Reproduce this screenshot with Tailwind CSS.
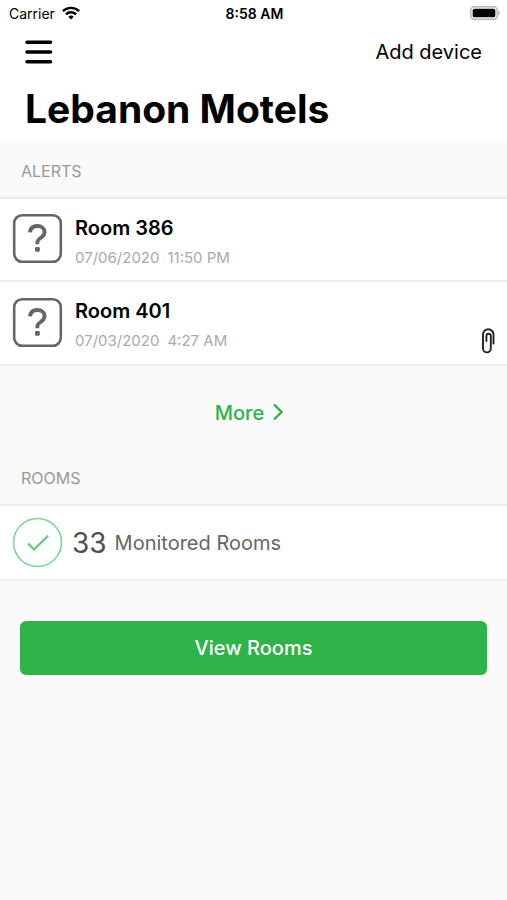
<!DOCTYPE html>
<html lang="en">
<head>
<meta charset="utf-8">
<meta name="viewport" content="width=device-width, initial-scale=1">
<title>Lebanon Motels</title>
<script src="https://cdn.jsdelivr.net/npm/@tailwindcss/browser@4"></script>
</head>
<body class="min-h-screen bg-[#fafafa] font-['Inter',sans-serif] text-black">
<header class="bg-white">
  <div class="grid h-7 grid-cols-3 items-center pr-[7px] pl-[9px] text-[14px] leading-5">
    <div class="flex items-center gap-[7px]">
      <span>Carrier</span>
      <svg class="mb-0.5 h-[14px] w-[18px]" viewBox="0 0 18 14" fill="none" stroke="#000" stroke-width="2.4" aria-label="Wi-Fi">
        <path d="M0.9 5.2a11.6 11.6 0 0 1 16.2 0"/>
        <path d="M3.9 8.3a7.3 7.3 0 0 1 10.2 0"/>
        <path d="M6.3 10.7a3.9 3.9 0 0 1 5.4 0L9 13.4z" fill="#000" stroke="none"/>
      </svg>
    </div>
    <div class="text-center font-semibold">8:58 AM</div>
    <svg class="mb-0.5 h-[14px] w-[30px] justify-self-end" viewBox="0 0 30 14" aria-label="Battery">
      <rect x="0.8" y="0.8" width="26.4" height="12.4" rx="3.6" fill="#fff" stroke="#b5b5b5" stroke-width="1.4"/>
      <rect x="2.7" y="2.7" width="22.6" height="8.6" rx="1.6" fill="#000"/>
      <path d="M28.3 4.8q1.6.6 1.6 2.2t-1.6 2.2z" fill="#b5b5b5"/>
    </svg>
  </div>
  <nav class="flex h-12 items-center justify-between px-[25px]">
    <button type="button" aria-label="Menu">
      <svg class="h-6 w-7" viewBox="0 0 28 24" stroke="#000" stroke-width="3.6" stroke-linecap="round">
        <path d="M2 2.2h23.5M2 12h23.5M2 21.8h23.5"/>
      </svg>
    </button>
    <a href="#" class="text-[20px] leading-6">Add device</a>
  </nav>
  <h1 class="px-[25px] pt-2 pb-2 text-[39px] leading-[49px] font-bold">Lebanon Motels</h1>
</header>
<main>
  <section>
    <h2 class="flex h-[58px] items-center border-b-2 border-[#ededed] px-[21px] pt-1 text-[16px] leading-5 text-[#999]">ALERTS</h2>
    <ul class="bg-white">
      <li class="flex h-[83px] items-center gap-3 border-b-2 border-[#ededed] px-3">
        <svg class="mb-0.5 size-[51px]" viewBox="0 0 51 51" fill="none" stroke="#666" aria-label="Unknown">
          <rect x="2.2" y="2.2" width="46.6" height="46.6" rx="8" stroke-width="2.6"/>
          <path d="M18 19.4c.4-4.200 3.300-6.400 7.300-6.400 4.200 0 7.300 2.300 7.300 6 0 3.100-1.800 4.600-4 6-2.300 1.500-3.300 2.600-3.300 4.800v1.400" stroke-width="3.800"/>
          <rect x="23" y="34" width="4.800" height="4.800" rx="1.200" fill="#666" stroke="none"/>
        </svg>
        <div class="flex flex-col gap-2 pt-1">
          <h3 class="text-[20px] leading-6 font-semibold">Room 386</h3>
          <p class="flex gap-2 text-[15px] leading-5 text-[#aaa]"><span>07/06/2020</span><span>11:50 PM</span></p>
        </div>
      </li>
      <li class="flex h-[84px] items-center gap-3 border-b-2 border-[#ededed] px-3">
        <svg class="mb-0.5 size-[51px]" viewBox="0 0 51 51" fill="none" stroke="#666" aria-label="Unknown">
          <rect x="2.2" y="2.2" width="46.6" height="46.6" rx="8" stroke-width="2.6"/>
          <path d="M18 19.4c.4-4.200 3.300-6.400 7.300-6.400 4.200 0 7.300 2.300 7.300 6 0 3.100-1.800 4.600-4 6-2.300 1.500-3.300 2.600-3.300 4.800v1.400" stroke-width="3.800"/>
          <rect x="23" y="34" width="4.800" height="4.800" rx="1.200" fill="#666" stroke="none"/>
        </svg>
        <div class="flex flex-col gap-2 pt-1">
          <h3 class="text-[20px] leading-6 font-semibold">Room 401</h3>
          <p class="flex gap-2 text-[15px] leading-5 text-[#aaa]"><span>07/03/2020</span><span>4:27 AM</span></p>
        </div>
        <svg class="mb-2.5 ml-auto h-[26px] w-[14px] self-end" viewBox="0 0 14 26" fill="none" stroke="#222" stroke-width="1.900" stroke-linecap="round" aria-label="Attachment">
          <path d="M12.500 15.500V6.500a5 5 0 0 0-10.500 0v14a3.900 3.900 0 0 0 7.800 0V8a2.200 2.200 0 0 0-4.400 0v5"/>
        </svg>
      </li>
    </ul>
    <div class="flex h-[94px] items-center justify-center pr-2">
      <a href="#" class="flex items-center gap-2 text-[20px] leading-6 font-medium text-[#2db34a]">More
        <svg class="mb-0.5 h-[18px] w-3" viewBox="0 0 12 18" fill="none" stroke="currentColor" stroke-width="2.400"><path d="M2 1.500l7.500 7.500L2 16.500"/></svg>
      </a>
    </div>
  </section>
  <section>
    <h2 class="flex h-[46px] items-center border-b-2 border-[#ededed] px-[21px] pb-2 text-[16px] leading-5 text-[#999]">ROOMS</h2>
    <div class="flex h-[75px] items-center gap-[9px] border-b-2 border-[#ededed] bg-white px-3">
      <svg class="size-[51px]" viewBox="0 0 51 51" fill="none" aria-hidden="true">
        <circle cx="25.500" cy="25.500" r="24" stroke="#7ad692" stroke-width="1.600"/>
        <path d="M16 26.500l6 6L36 18.800" stroke="#5fca7b" stroke-width="2.200"/>
      </svg>
      <p class="flex items-center gap-2 text-[20px] leading-6 text-[#666]"><span class="text-[28px] leading-8 text-[#505050]">33</span>Monitored Rooms</p>
    </div>
    <div class="px-5 pt-10">
      <button type="button" class="h-[54px] w-full rounded-md bg-[#2db34a] text-[20px] leading-6 font-medium text-white">View Rooms</button>
    </div>
  </section>
</main>
</body>
</html>
